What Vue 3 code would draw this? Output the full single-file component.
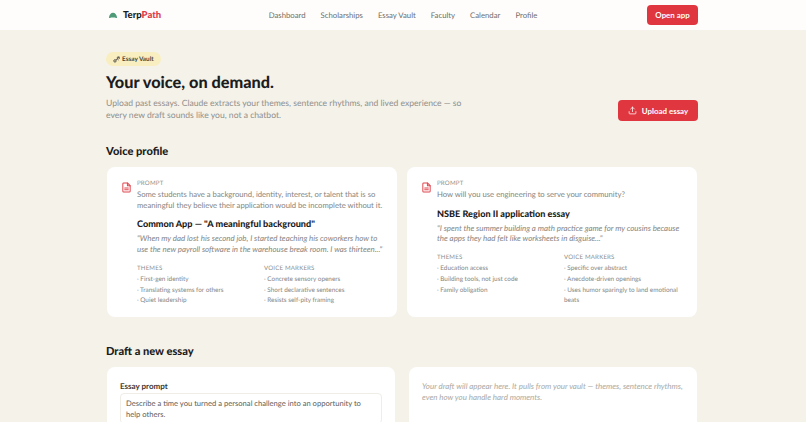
<template>
  <div class="page">
    <header class="topbar">
      <div class="brand">
        <svg class="logo" viewBox="0 0 12 8" width="10" height="6.500">
          <path d="M1 7.200C1.300 3.200 3.400 .8 6 .8s4.700 2.400 5 6.400c-.9.5-1.900.4-2.300-.4H3.300c-.4.8-1.400.9-2.300.4z" fill="#4f9a76" />
        </svg>
        <span class="brand-name">Terp<em>Path</em></span>
      </div>
      <nav class="nav">
        <a v-for="item in navItems" :key="item">{{ item }}</a>
      </nav>
      <button class="btn open-btn">Open app</button>
    </header>

    <main class="content">
      <section class="hero">
        <div class="hero-text">
          <span class="badge">
            <svg viewBox="0 0 10 10" width="7" height="7" fill="none" stroke="#55504a" stroke-width="1.400">
              <circle cx="2.800" cy="7" r="1.700" />
              <path d="M4 5.800 8 1.800M5.500 2 8.800 1.200 8.800 4.300M6 4.200l2 1.500" />
            </svg>
            Essay Vault
          </span>
          <h1>Your voice, on demand.</h1>
          <p>Upload past essays. Claude extracts your themes, sentence rhythms, and lived experience — so every new draft sounds like you, not a chatbot.</p>
        </div>
        <button class="btn upload-btn">
          <svg viewBox="0 0 24 24" width="9" height="9" fill="none" stroke="#fff" stroke-width="2" stroke-linecap="round" stroke-linejoin="round">
            <path d="M21 15v4a2 2 0 0 1-2 2H5a2 2 0 0 1-2-2v-4" />
            <path d="M17 8l-5-5-5 5" />
            <path d="M12 3v12" />
          </svg>
          Upload essay
        </button>
      </section>

      <h2 class="voice-title">Voice profile</h2>
      <section class="essay-grid">
        <article v-for="essay in essays" :key="essay.title" class="essay-card">
          <svg class="doc-icon" viewBox="0 0 24 24" width="11" height="11" fill="none" stroke="#e0474f" stroke-width="2.200" stroke-linecap="round" stroke-linejoin="round">
            <path d="M14 2H6a2 2 0 0 0-2 2v16a2 2 0 0 0 2 2h12a2 2 0 0 0 2-2V8z" />
            <path d="M14 2v6h6" />
            <path d="M8 13h8M8 17h8" />
          </svg>
          <div class="essay-body">
            <div class="label">PROMPT</div>
            <p class="prompt">{{ essay.prompt }}</p>
            <h3>{{ essay.title }}</h3>
            <p class="quote">{{ essay.quote }}</p>
            <div class="lists">
              <div>
                <div class="label">THEMES</div>
                <ul>
                  <li v-for="t in essay.themes" :key="t">· {{ t }}</li>
                </ul>
              </div>
              <div>
                <div class="label">VOICE MARKERS</div>
                <ul>
                  <li v-for="m in essay.markers" :key="m">· {{ m }}</li>
                </ul>
              </div>
            </div>
          </div>
        </article>
      </section>

      <h2 class="draft-title">Draft a new essay</h2>
      <section class="draft-grid">
        <div class="draft-card form-card">
          <label>Essay prompt</label>
          <div class="textarea">Describe a time you turned a personal challenge into an opportunity to help others.</div>
        </div>
        <div class="draft-card output-card">
          <p>Your draft will appear here. It pulls from your vault — themes, sentence rhythms, even how you handle hard moments.</p>
        </div>
      </section>
    </main>
  </div>
</template>

<script setup>
const navItems = ['Dashboard', 'Scholarships', 'Essay Vault', 'Faculty', 'Calendar', 'Profile']

const essays = [
  {
    prompt: 'Some students have a background, identity, interest, or talent that is so meaningful they believe their application would be incomplete without it.',
    title: 'Common App — "A meaningful background"',
    quote: '"When my dad lost his second job, I started teaching his coworkers how to use the new payroll software in the warehouse break room. I was thirteen..."',
    themes: ['First-gen identity', 'Translating systems for others', 'Quiet leadership'],
    markers: ['Concrete sensory openers', 'Short declarative sentences', 'Resists self-pity framing'],
  },
  {
    prompt: 'How will you use engineering to serve your community?',
    title: 'NSBE Region II application essay',
    quote: '"I spent the summer building a math practice game for my cousins because the apps they had felt like worksheets in disguise..."',
    themes: ['Education access', 'Building tools, not just code', 'Family obligation'],
    markers: ['Specific over abstract', 'Anecdote-driven openings', 'Uses humor sparingly to land emotional beats'],
  },
]
</script>

<style>
html, body {
  margin: 0;
  height: 100%;
  overflow: hidden;
  background: #f5f2ea;
}
</style>

<style scoped>
.page {
  font-family: "Lato", "Open Sans", sans-serif;
  color: #1c1c1c;
  height: 422px;
  overflow: hidden;
  text-rendering: geometricPrecision;
}

.topbar {
  height: 30px;
  background: #fefdfc;
  display: grid;
  grid-template-columns: 1fr auto 1fr;
  align-items: center;
  padding: 0 108px;
}

.brand {
  display: flex;
  align-items: center;
  gap: 5px;
}

.brand-name {
  font-weight: 900;
  font-size: 9.500px;
}

.brand-name em {
  font-style: normal;
  color: #e0394a;
}

.nav {
  display: flex;
  gap: 15px;
}

.nav a {
  font-size: 7.750px;
  color: #6e6e6a;
}

.btn {
  border: none;
  background: #e0363f;
  color: #fff;
  font-family: inherit;
  font-weight: 700;
  font-size: 7.900px;
  border-radius: 4px;
}

.open-btn {
  justify-self: end;
  width: 51px;
  height: 20px;
  padding: 0;
}

.content {
  padding: 22px 108px 0 106px;
}

.hero {
  display: flex;
  justify-content: space-between;
  align-items: flex-end;
}

.hero-text {
  width: 370px;
}

.badge {
  display: flex;
  width: fit-content;
  align-items: center;
  gap: 2px;
  height: 14px;
  padding: 0 7px;
  border-radius: 7px;
  background: #f9eec0;
  color: #4a4535;
  font-size: 6.400px;
  font-weight: 700;
}

h1 {
  font-size: 16.300px;
  font-weight: 900;
  margin: 6px 0 3px;
  line-height: 22px;
}

.hero-text p {
  margin: 0;
  font-size: 8.600px;
  line-height: 12px;
  color: #90908a;
}

.upload-btn {
  display: flex;
  align-items: center;
  justify-content: center;
  gap: 5px;
  width: 80px;
  height: 21px;
}

h2 {
  font-size: 11.100px;
  font-weight: 900;
  line-height: 16px;
  margin: 0;
}

.voice-title {
  margin-top: 23px;
}

.essay-grid {
  display: grid;
  grid-template-columns: 290px 290px;
  gap: 10px;
  margin: 7px 0 0 1px;
}

.essay-card {
  display: flex;
  gap: 5px;
  height: 150px;
  box-sizing: border-box;
  background: #fff;
  border-radius: 8px;
  padding: 12px 11px 12px 14px;
}

.doc-icon {
  flex: none;
  margin-top: 3px;
}

.essay-body {
  flex: 1;
  min-width: 0;
}

.label {
  font-size: 6.100px;
  line-height: 10px;
  color: #8f8f8a;
  letter-spacing: 0.200px;
}

.prompt {
  margin: 0;
  font-size: 7.700px;
  line-height: 10.700px;
  color: #83837e;
}

h3 {
  font-size: 9.100px;
  font-weight: 900;
  margin: 8px 0 4px;
  line-height: 11px;
}

.quote {
  margin: 0 0 9px;
  font-size: 7.900px;
  line-height: 10.700px;
  font-style: italic;
  color: #85857f;
}

.lists {
  display: grid;
  grid-template-columns: 127px 1fr;
}

ul {
  list-style: none;
  margin: 1px 0 0;
  padding: 0;
}

li {
  font-size: 6.400px;
  line-height: 10.700px;
  color: #85857f;
}

.draft-title {
  margin-top: 27px;
}

.draft-grid {
  display: grid;
  grid-template-columns: 288px 288px;
  gap: 14px;
  margin: 7px 0 0 1px;
}

.draft-card {
  background: #fff;
  border-radius: 8px;
  height: 140px;
  box-sizing: border-box;
}

.form-card {
  padding: 14px 13px;
}

label {
  display: block;
  font-size: 8px;
  font-weight: 700;
  color: #3a3a38;
  line-height: 10px;
  margin-bottom: 2px;
}

.textarea {
  border: 1px solid #f0ede6;
  border-radius: 4px;
  padding: 4px 5px;
  font-size: 7.600px;
  line-height: 10.700px;
  color: #5d5d59;
}

.output-card {
  padding: 14px 13px;
}

.output-card p {
  margin: 0;
  font-size: 7.950px;
  line-height: 10.700px;
  font-style: italic;
  color: #a9a9a4;
}
</style>
